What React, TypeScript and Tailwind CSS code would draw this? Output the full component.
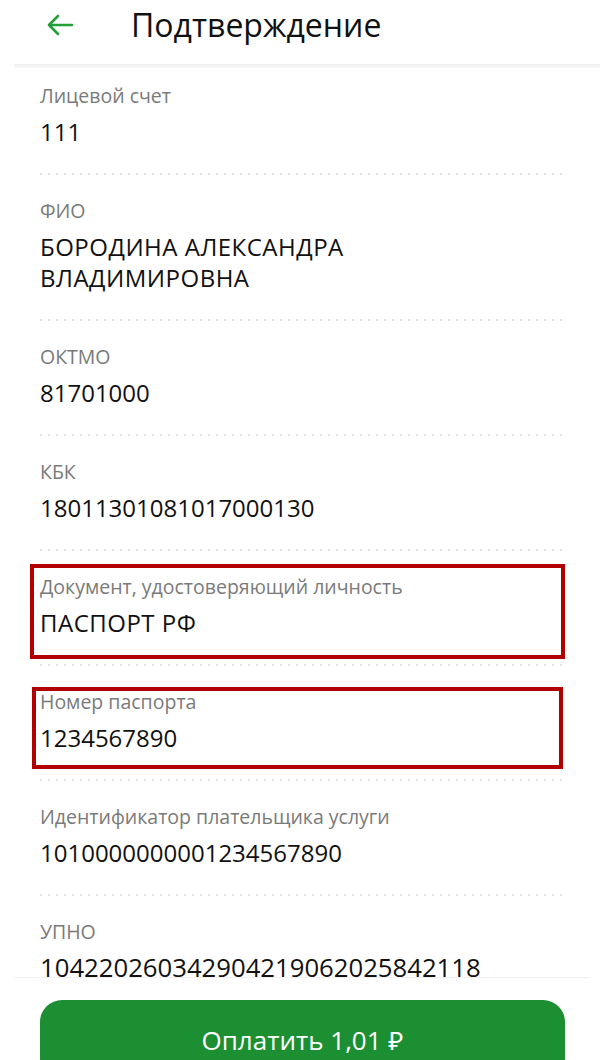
import React from 'react';

type Field = {
  label: string;
  value: string;
  box?: string;
  big?: boolean;
  caps?: boolean;
};

const fields: Field[] = [
  { label: 'Лицевой счет', value: '111' },
  { label: 'ФИО', value: 'БОРОДИНА АЛЕКСАНДРА ВЛАДИМИРОВНА', caps: true },
  { label: 'ОКТМО', value: '81701000' },
  { label: 'КБК', value: '18011301081017000130' },
  {
    label: 'Документ, удостоверяющий личность',
    value: 'ПАСПОРТ РФ',
    caps: true,
    box: '-top-[11px] -bottom-[21px] -left-[10px] -right-[2px]',
  },
  {
    label: 'Номер паспорта',
    value: '1234567890',
    box: '-top-[3px] -bottom-[16px] -left-[8px] right-0',
  },
  { label: 'Идентификатор плательщика услуги', value: '1010000000001234567890' },
  { label: 'УПНО', value: '104220260342904219062025842118', big: true },
];

const Divider = () => (
  <div className="h-[2px] w-full bg-[linear-gradient(to_right,#e3e3e3_2px,transparent_2px)] bg-[length:8px_2px]" />
);

const Row: React.FC<{ field: Field; first?: boolean; last?: boolean }> = ({ field, first, last }) => (
  <div>
    <div className={first ? 'pt-[16px] pb-[26px]' : 'pt-[24px] pb-[26px]'}>
      <div className="relative">
        {field.box && (
          <div className={`pointer-events-none absolute border-[4px] border-[#b00000] ${field.box}`} />
        )}
        <div className="text-[19.5px] leading-[24px] text-[#7a7a7a]">{field.label}</div>
        <div
          className={
            field.big
              ? 'mt-[8px] text-[25.7px] leading-[31px] text-[#111]'
              : field.caps
                ? 'mt-[8px] max-w-[380px] text-[24px] leading-[31px] tracking-[0.5px] text-[#111]'
                : 'mt-[8px] text-[24px] leading-[31px] text-[#111]'
          }
        >
          {field.value}
        </div>
      </div>
    </div>
    {!last && <Divider />}
  </div>
);

export default function App() {
  return (
    <div
      className="flex h-[1060px] w-[600px] flex-col overflow-hidden bg-white"
      style={{ fontFamily: '"Open Sans", "Noto Sans", sans-serif' }}
    >
      {/* header */}
      <div className="relative h-[68px] shrink-0">
        <div className="flex items-center pl-[46px] pt-[6px]">
          <svg width="28" height="22" viewBox="0 0 28 22" fill="none">
            <path
              d="M26 11H3M12 2L3 11l9 9"
              stroke="#21a038"
              strokeWidth="2.6"
              strokeLinecap="round"
              strokeLinejoin="round"
            />
          </svg>
          <div className="ml-[57px] text-[32px] leading-[38px] text-[#111]">Подтверждение</div>
        </div>
        <div className="absolute bottom-0 left-[14px] right-0 h-[4px] bg-gradient-to-b from-[#efefef] to-[#f8f8f8]" />
      </div>

      {/* fields */}
      <div className="min-h-0 flex-1 overflow-hidden px-[40px] pr-[37px]">
        {fields.map((f, i) => (
          <Row key={f.label} field={f} first={i === 0} last={i === fields.length - 1} />
        ))}
      </div>

      {/* bottom bar */}
      <div className="ml-[14px] mr-[10px] h-[83px] shrink-0 border-t border-[#f0f0f0] pl-[26px] pr-[25px] pt-[22px]">
        <button className="flex h-[80px] w-full items-center justify-center rounded-[22px] bg-[#1b8f32] text-[26px] text-white">
          Оплатить 1,01 ₽
        </button>
      </div>
    </div>
  );
}
